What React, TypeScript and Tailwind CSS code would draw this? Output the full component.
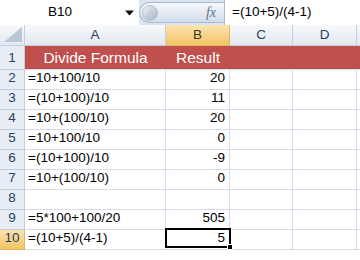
import React from 'react';

const font = { fontFamily: '"Liberation Sans", Arial, sans-serif' };

const rows: { n: number; a: string; b: string }[] = [
  { n: 2, a: '=10+100/10', b: '20' },
  { n: 3, a: '=(10+100)/10', b: '11' },
  { n: 4, a: '=10+(100/10)', b: '20' },
  { n: 5, a: '=10+100/10', b: '0' },
  { n: 6, a: '=(10+100)/10', b: '-9' },
  { n: 7, a: '=10+(100/10)', b: '0' },
  { n: 8, a: '', b: '' },
  { n: 9, a: '=5*100+100/20', b: '505' },
  { n: 10, a: '=(10+5)/(4-1)', b: '5' },
];

const colHead =
  'flex items-center justify-center border-r border-b border-[#c3cddb] bg-gradient-to-b from-[#f8f9fc] to-[#e3e8ef] text-[#27415f] text-[13.5px]';
const rowHead =
  'flex items-end justify-center pb-[1px] border-r border-b border-[#c3cddb] bg-[#e8edf5] text-[#27415f] text-[13.5px]';
const cell = 'flex items-end border-r border-b border-[#d6dde8] bg-white text-black text-[13.5px] pb-[1px]';

export default function App() {
  return (
    <div className="w-[360px] h-[260px] overflow-hidden flex flex-col bg-white" style={font}>
      <div className="h-[3px] bg-[#cbdbee]" />
      {/* formula bar */}
      <div className="h-[25px] flex bg-[#dbe5f1]">
        <div className="w-[139px] bg-white flex items-center relative">
          <span className="w-[120px] text-center text-[13.5px] text-black">B10</span>
          <svg width="9" height="6" viewBox="0 0 9 6" className="ml-[5px]">
            <path d="M0 0.5h9L4.5 5.5z" fill="#111" />
          </svg>
        </div>
        <div className="w-[85px] my-[2px] flex items-center justify-between rounded-l-full border border-r-0 border-[#a8bad1] bg-gradient-to-b from-[#f5f8fc] via-[#e4ebf4] to-[#d3ddea]">
          <div className="ml-[2px] w-[16px] h-[16px] rounded-full bg-gradient-to-br from-[#f3f6fa] via-[#c7d1dd] to-[#a9b6c6] border border-[#b5c2d2]" />
          <span
            className="mr-[8px] text-[14px] italic text-[#5f6f86]"
            style={{ fontFamily: '"Liberation Serif", "Times New Roman", serif' }}
          >
            fx
          </span>
        </div>
        <div className="flex-1 bg-white border-l border-[#a8bad1] flex items-center pl-[7px] text-[13.5px] text-black">
          =(10+5)/(4-1)
        </div>
      </div>
      <div className="h-[3px] bg-[#d5dfec]" />

      {/* grid */}
      <div className="grid grid-cols-[25px_141px_64px_63px_64px_1fr] grid-rows-[21px_24px_repeat(10,20px)]">
        <div className="border-r border-b border-[#c3cddb] bg-gradient-to-b from-[#f8f9fc] to-[#e3e8ef] flex items-end justify-end pr-[2px] pb-[3px]">
          <svg width="18" height="15" viewBox="0 0 18 15">
            <path d="M18 0V15H0z" fill="#b9c7d8" />
          </svg>
        </div>
        <div className={colHead}>A</div>
        <div className="flex items-center justify-center border-r border-b border-[#e0b462] bg-gradient-to-b from-[#fbe3b0] to-[#f3c562] text-[#3a3320] text-[13.5px]">
          B
        </div>
        <div className={colHead}>C</div>
        <div className={colHead}>D</div>
        <div className={colHead}>&nbsp;</div>

        <div className={rowHead + ' items-center pb-0'}>1</div>
        <div className="col-span-5 flex bg-[#c0504d] border-b border-[#d6dde8] text-white text-[15.5px]">
          <div className="w-[141px] flex items-center justify-center">Divide Formula</div>
          <div className="w-[64px] flex items-center justify-center">Result</div>
        </div>

        {rows.map((r) => (
          <React.Fragment key={r.n}>
            <div
              className={
                r.n === 10
                  ? 'flex items-end justify-center pb-[1px] border-r border-b border-[#e0b462] bg-gradient-to-b from-[#fbe3b0] to-[#f3c562] text-[#27415f] text-[13.5px]'
                  : rowHead
              }
            >
              {r.n}
            </div>
            <div className={cell + ' pl-[3px]'}>{r.a}</div>
            <div className={cell + ' justify-end pr-[4px] relative'}>
              {r.b}
              {r.n === 10 && (
                <div className="absolute -left-[1px] -top-[2px] w-[66px] h-[20px] border-[2.5px] border-black">
                  <div className="absolute -right-[4px] -bottom-[4px] w-[6px] h-[6px] bg-black border border-white" />
                </div>
              )}
            </div>
            <div className={cell} />
            <div className={cell} />
            <div className={cell} />
          </React.Fragment>
        ))}
      </div>
    </div>
  );
}
